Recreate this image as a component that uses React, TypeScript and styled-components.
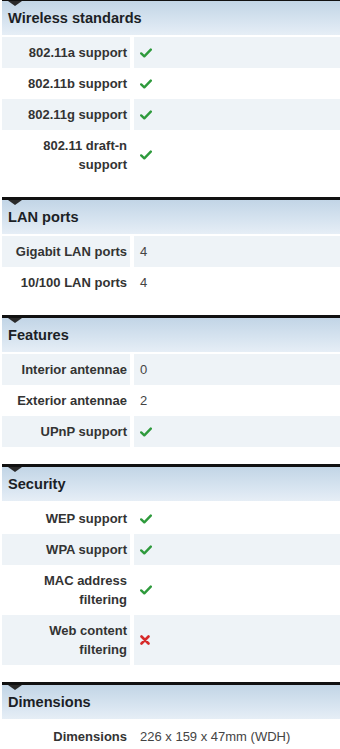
import React from 'react'
import styled, { createGlobalStyle } from 'styled-components'

const GlobalStyle = createGlobalStyle`
	body {
		margin: 0;
		background: #fff;
		font-family: "Liberation Sans", Arial, sans-serif;
	}
`

const Page = styled.div`
	margin-top: -2px;
	padding-left: 2px;
	width: 338px;
`

const Section = styled.section`
	border-top: 3px solid #111;
	margin-bottom: 17px;
`

const SectionHeader = styled.h2`
	position: relative;
	margin: 0 0 2px;
	height: 34px;
	display: flex;
	align-items: center;
	padding-left: 6px;
	background: linear-gradient(to bottom, #c2d5e6 0%, #d7e4f0 60%, #e6eef6 100%);
	color: #1c1f26;
	font-size: 14.6px;
	font-weight: bold;

	&::before {
		content: '';
		position: absolute;
		left: 6px;
		top: 0;
		border-left: 7px solid transparent;
		border-right: 7px solid transparent;
		border-top: 5px solid #2a2a2a;
	}
`

const Row = styled.div`
	display: flex;
	gap: 4px;
`

const Label = styled.div<{ $shaded?: boolean }>`
	width: 128px;
	flex-shrink: 0;
	box-sizing: border-box;
	padding: 6px 3px 6px 0;
	text-align: right;
	font-size: 13px;
	font-weight: bold;
	line-height: 19px;
	color: #333;
	background: ${p => (p.$shaded ? '#eef3f7' : 'transparent')};
`

const Value = styled.div<{ $shaded?: boolean }>`
	flex: 1;
	display: flex;
	align-items: center;
	padding-left: 6px;
	font-size: 13px;
	line-height: 19px;
	color: #444;
	background: ${p => (p.$shaded ? '#eef3f7' : 'transparent')};
`

const Check = () => (
	<svg width="12" height="10" viewBox="0 0 12 10">
		<path d="M1.2 5.4 L4.3 8.3 L10.8 1.6" fill="none" stroke="#2e9a3c" strokeWidth="2.4" strokeLinecap="round" strokeLinejoin="round" />
	</svg>
)

const Cross = () => (
	<svg width="10" height="10" viewBox="0 0 10 10">
		<path d="M1.5 1.5 L8.5 8.5 M8.5 1.5 L1.5 8.5" fill="none" stroke="#d62a2a" strokeWidth="2.6" strokeLinecap="round" />
	</svg>
)

type Spec = { label: React.ReactNode; value: React.ReactNode; shaded?: boolean }

const yes = <Check />
const no = <Cross />

const sections: { title: string; rows: Spec[] }[] = [
	{
		title: 'Wireless standards',
		rows: [
			{ label: '802.11a support', value: yes, shaded: true },
			{ label: '802.11b support', value: yes },
			{ label: '802.11g support', value: yes, shaded: true },
			{ label: <>802.11 draft-n<br />support</>, value: yes },
		],
	},
	{
		title: 'LAN ports',
		rows: [
			{ label: 'Gigabit LAN ports', value: '4', shaded: true },
			{ label: '10/100 LAN ports', value: '4' },
		],
	},
	{
		title: 'Features',
		rows: [
			{ label: 'Interior antennae', value: '0', shaded: true },
			{ label: 'Exterior antennae', value: '2' },
			{ label: 'UPnP support', value: yes, shaded: true },
		],
	},
	{
		title: 'Security',
		rows: [
			{ label: 'WEP support', value: yes },
			{ label: 'WPA support', value: yes, shaded: true },
			{ label: <>MAC address<br />filtering</>, value: yes },
			{ label: <>Web content<br />filtering</>, value: no, shaded: true },
		],
	},
	{
		title: 'Dimensions',
		rows: [{ label: 'Dimensions', value: '226 x 159 x 47mm (WDH)' }],
	},
]

export default function App() {
	return (
		<>
			<GlobalStyle />
			<Page>
				{sections.map(s => (
					<Section key={s.title}>
						<SectionHeader>{s.title}</SectionHeader>
						{s.rows.map((r, i) => (
							<Row key={i}>
								<Label $shaded={r.shaded}>{r.label}</Label>
								<Value $shaded={r.shaded}>{r.value}</Value>
							</Row>
						))}
					</Section>
				))}
			</Page>
		</>
	)
}
